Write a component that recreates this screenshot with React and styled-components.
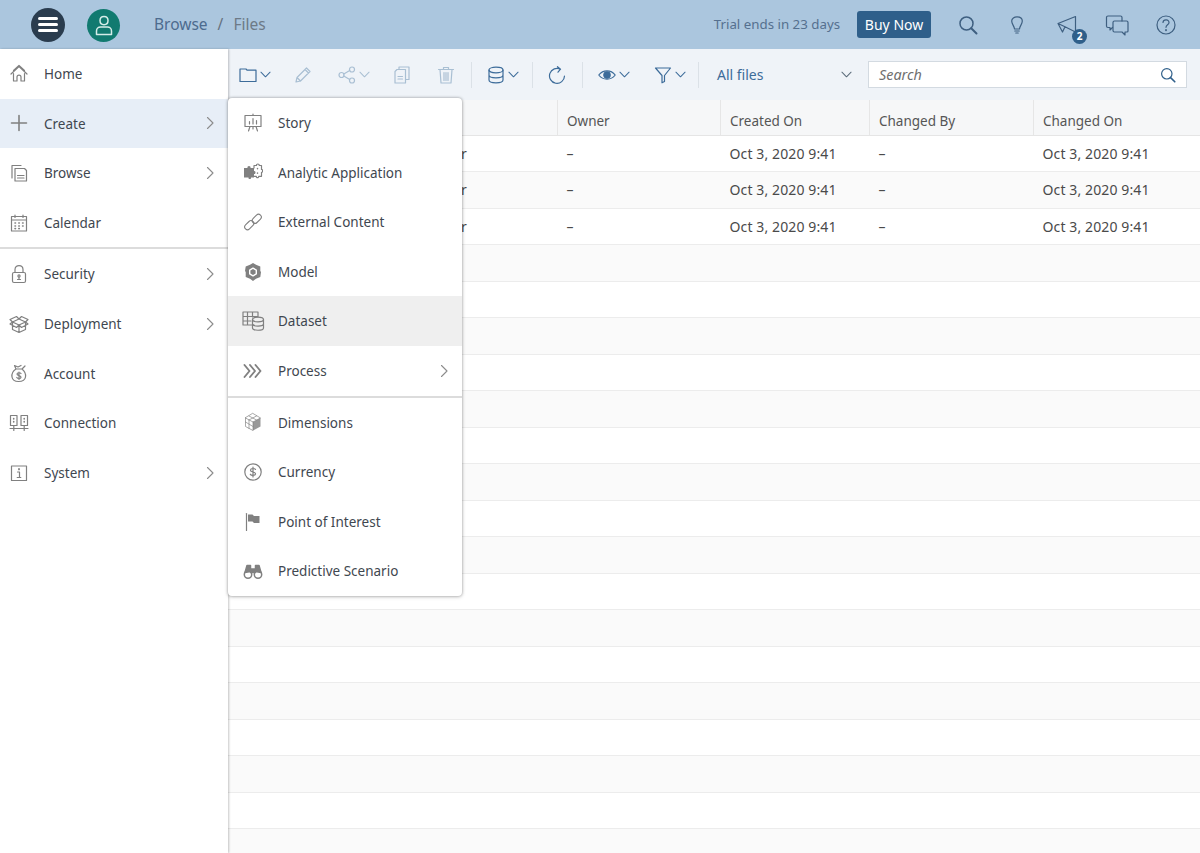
import styled, { createGlobalStyle } from "styled-components";

const FONT = `"Noto Sans", "Open Sans", sans-serif`;

const GlobalStyle = createGlobalStyle`
  html, body {
    margin: 0;
    height: 100%;
    overflow: hidden;
    background: #fff;
    font-family: ${FONT};
  }
  * { box-sizing: border-box; }
`;

const Icon = ({ size = 20, children, ...rest }) => (
  <svg width={size} height={size} viewBox="0 0 20 20" fill="none" stroke="currentColor" strokeWidth="1.2" strokeLinecap="round" strokeLinejoin="round" {...rest}>
    {children}
  </svg>
);

const Chevron = () => (
  <Icon size={14} viewBox="0 0 14 14" strokeWidth="1.1"><path d="M4.5 1.5 10 7 4.5 12.5" /></Icon>
);
const ChevronDown = () => (
  <Icon size={11} viewBox="0 0 12 12" strokeWidth="1.1"><path d="M1 3.5 6 8.5 11 3.5" /></Icon>
);

const HomeIcon = () => <Icon><path d="M2 10 10 2.5 18 10M4.5 6.5 10 1.5l5.5 5M4.5 9.5V17h3.5v-4c0-2.6 4-2.600 4 0v4h3.500V9.500" /></Icon>;
const PlusIcon = () => <Icon strokeWidth="1.6"><path d="M10 2.500v15M2.500 10h15" /></Icon>;
const BrowseIcon = () => <Icon><path d="M3 15V2.500h9M6 5.500h9.500l2 2V18H6zM8.500 12.500h6.500M8.500 15h6.500" /></Icon>;
const CalendarIcon = () => <Icon><path d="M2.500 3.500h15V18h-15zM2.500 7h15M6 2v2.500M14 2v2.500" /><path strokeWidth="1.6" d="M6 10h.5M9.800 10h.5M13.600 10h.5M6 13h.5M9.800 13h.5M13.600 13h.5M6 15.600h.5M9.800 15.600h.5" /></Icon>;
const LockIcon = () => (
  <Icon>
    <path d="M6 8.500V5.500c0-5.300 8-5.300 8 0v3" />
    <rect x="3.500" y="8.500" width="13" height="10" rx="1.500" />
    <circle cx="10" cy="12" r="1.100" />
    <path d="M10 13v2.500M8.500 15.500h3" />
  </Icon>
);
const BoxIcon = () => <Icon><path d="M3.500 9v6.500L10 18.500l6.500-3V9M10 18.500V11L3.500 8 1 5.500 7.500 2.500 10 5l2.500-2.500L19 5.500 16.500 8 10 11M10 5 3.500 8M10 5l6.500 3M1 10l2.500-2M19 10l-2.500-2M1 10l6.500 3.500L10 11l2.500 2.500L19 10" /></Icon>;
const MoneyIcon = () => <Icon><path d="M7 6c-3 2-4.500 5-4 8 .5 3 3 4.500 6.500 4.500S16 17 16.500 14 15.500 8 13 6zM7 6 5.500 2.500 9 4l3-1.500M13 6l3-3M7.500 6h5" /><path d="M12 10.500c-.5-1-3.800-1.200-4 .5-.2 2 4.300 1.200 4 3.300-.2 1.600-3.600 1.400-4.200.2M10 9v7.500" /></Icon>;
const ConnectionIcon = () => <Icon><path d="M1.500 2.500h6.500v10H1.500zM12 2.500h6.500v10H12zM4.800 12.500v5M15.200 12.500v5M1 15.500h18" /><path strokeWidth="1.6" d="M4.700 5.500v.5M4.700 8.500v.5M15.200 5.500v.5M15.200 8.500v.5" /></Icon>;
const InfoIcon = () => <Icon><path d="M2.500 3h15v14.500h-15zM8.500 9h2v5.500M8.200 14.500h3.600" /><path strokeWidth="1.8" d="M10 6v.4" /></Icon>;

const StoryIcon = () => <Icon><path d="M2 2.500h16v11H2zM10 1v1.500M5.500 18 7 13.500M14.500 18 13 13.500M10 13.500V16M6.500 11V8.500M10 11V5.500M13.500 11V7.500" /></Icon>;
const AppIcon = () => (
  <Icon>
    <path fill="currentColor" stroke="none" d="M1 6h3.500c-.8-2.800 3.800-2.800 3 0H11v3c2-.6 2 3.600 0 3v3.500H8c.5 2-3 2-2.500 0H1z" />
    <path d="M11 6V3.500h2.500c-.3-2 3-2 2.700 0h2.300v4c1.500-.4 1.500 3.200 0 2.800v4h-2.800c.3 1.800-2.700 1.800-2.400 0H11" />
    <path strokeWidth="1.500" d="M14.500 6.500v.3M14.500 11v.3" />
  </Icon>
);
const LinkIcon = () => (
  <Icon strokeWidth="1.1">
    <rect x="1" y="10.400" width="10.500" height="5.600" rx="2.800" transform="rotate(-45 6.250 13.200)" />
    <rect x="8.500" y="4" width="10.500" height="5.600" rx="2.800" transform="rotate(-45 13.750 6.800)" />
  </Icon>
);
const ModelIcon = () => (
  <Icon>
    <path fill="currentColor" stroke="none" d="M10 1 13 2.800 17.300 4.500 17.300 9 18 10 17.300 15 13 16.800 10 19 7 16.800 2.700 15 2.700 10 2 9 2.700 4.500 7 2.800z" />
    <path stroke="#fff" strokeWidth="1.400" d="M10 6.200 13.300 8.100V11.900L10 13.800 6.700 11.900V8.100z" />
  </Icon>
);
const DatasetIcon = () => (
  <Icon size={24} viewBox="0 0 24 24">
    <path d="M13 16H2V3h15v5M2 7.500h15M2 12h8M6.500 3v13M11.500 3v5" />
    <ellipse cx="17" cy="10.500" rx="5.500" ry="2.300" />
    <path d="M11.500 10.500v8.500c0 3 11 3 11 0v-8.500M11.500 14.800c0 3 11 3 11 0" />
  </Icon>
);
const ProcessIcon = () => <Icon strokeWidth="1.900"><path d="M1.500 4 6.500 10 1.500 16M7 4 12 10 7 16M12.500 4 17.500 10 12.500 16" /></Icon>;
const CubeIcon = () => (
  <Icon>
    <path fill="currentColor" stroke="none" opacity=".8" d="M10 10 17.500 6V14.500L10 18.500z" />
    <path strokeWidth=".9" opacity=".75" d="M10 1.500 17.500 6 10 10 2.500 6zM2.500 6v8.500L10 18.500V10M6 4 13.500 8M13.500 4 6 8M2.500 10 10 14.500M6 8v8.500" />
  </Icon>
);
const CurrencyIcon = () => <Icon><circle cx="10" cy="10" r="8.200" /><path d="M12.500 7.500c-.6-1.400-4.800-1.500-5 .6-.2 2.400 5.300 1.400 5 3.900-.2 1.800-4.500 1.800-5.200.2M10 5v10" /></Icon>;
const FlagIcon = () => <Icon><path d="M3.500 1.500v17" /><path fill="currentColor" stroke="none" d="M5 2.500h4.500L11 4h5.500v7H11l-1.500-1.500H5z" /></Icon>;
const BinocularIcon = () => (
  <Icon strokeWidth="1.500">
    <circle cx="5" cy="13.500" r="3.700" />
    <circle cx="15" cy="13.500" r="3.700" />
    <path fill="currentColor" d="M2 11.500 4 4.500h3.500v6zM18 11.500 16 4.500h-3.500v6zM7.500 8h5v3.500h-5z" />
  </Icon>
);

const FolderIcon = () => <Icon size={18} viewBox="0 0 18 18"><path d="M1 3h6l1 1.200h9V15.500H1z" /></Icon>;
const PencilIcon = () => <Icon size={18} viewBox="0 0 18 18"><path d="M2 16l1-4.500L12.500 2l3.500 3.500L6.500 15zM3 11.500 6.500 15M11 3.500 14.500 7" /></Icon>;
const ShareIcon = () => <Icon size={18} viewBox="0 0 18 18"><circle cx="3.500" cy="9" r="2.500" /><circle cx="14" cy="3.500" r="2.500" /><circle cx="14" cy="14.500" r="2.500" /><path d="M5.800 8 11.700 4.600M5.800 10 11.700 13.400" /></Icon>;
const CopyIcon = () => <Icon size={18} viewBox="0 0 18 18"><path d="M6 3.500V1h10v12.500h-3M2 5.500l2-2h8.500V17H2zM5 10.500h4.500M5 13h4.500" /></Icon>;
const TrashIcon = () => <Icon size={18} viewBox="0 0 18 18"><path d="M1.500 3.500h15M6.500 3.500V1.500h5v2M3 3.500l1 13.500h10l1-13.500M7 6.500v8M9 6.500v8M11 6.500v8" /></Icon>;
const DatabaseIcon = () => <Icon size={18} viewBox="0 0 18 18"><ellipse cx="9" cy="4" rx="7" ry="2.800" /><path d="M2 4v10c0 3.700 14 3.700 14 0V4M2 9c0 3.700 14 3.700 14 0" /></Icon>;
const RefreshIcon = () => <Icon size={18} viewBox="0 0 18 18"><path d="M12.500 3.200A7.500 7.500 0 1 0 16.500 10M9.500.7l3 2.500-2.500 3" /></Icon>;
const EyeIcon = () => <Icon size={18} viewBox="0 0 18 18"><path d="M.8 9C5 3.500 13 3.500 17.200 9 13 14.500 5 14.500.8 9z" /><circle cx="9" cy="9" r="3.200" fill="currentColor" /></Icon>;
const FilterIcon = () => <Icon size={18} viewBox="0 0 18 18"><path d="M1.500 2h15L10.500 9.500V15.500L8 16.800V9.500z" /></Icon>;
const SearchIcon = ({ size = 20 }) => <Icon size={size} strokeWidth="1.500"><circle cx="8.500" cy="8.500" r="6.500" /><path d="M13.200 13.200 18.500 18.500" strokeWidth="2" /></Icon>;
const BulbIcon = () => <Icon><path d="M7.500 14c0-3-2.800-4.500-2.800-8 0-5.500 10.600-5.500 10.600 0 0 3.500-2.800 5-2.800 8zM7.800 16h4.400M8.800 18h2.400" /></Icon>;
const MegaphoneIcon = () => <Icon><path d="M1 8.500 18.500 1.500V17L8 11.800 5.500 17 1 8.500zM1 8.500l7 3.300" /></Icon>;
const ChatIcon = () => (
  <Icon size={24} viewBox="0 0 24 24">
    <path d="M17 8V4.500A1.500 1.500 0 0 0 15.500 3H3A1.500 1.500 0 0 0 1.500 4.500V13A1.500 1.500 0 0 0 3 14.500h2V17l2.500-2.500" />
    <path d="M9.500 8h12A1.500 1.500 0 0 1 23 9.500V18a1 1 0 0 1-1 1h-2v3l-3-3H9.500A1.500 1.500 0 0 1 8 17.500v-8A1.500 1.500 0 0 1 9.500 8z" />
  </Icon>
);
const HelpIcon = () => <Icon><circle cx="10" cy="10" r="9" /><path d="M7 7.500c.3-3.800 6.300-3.500 6 .3-.2 2-3 2.200-3 4.500" /><path strokeWidth="1.800" d="M10 15v.3" /></Icon>;
const UserIcon = () => <Icon size={22} viewBox="0 0 22 22" strokeWidth="1.500"><path d="M7 6.500c0-5.500 8-5.500 8 0s-8 5.500-8 0zM3.500 20.500V17c0-2.500 2-4 4-4h7c2 0 4 1.500 4 4v3.500z" /></Icon>;

const navTop = [
  { label: "Home", icon: HomeIcon },
  { label: "Create", icon: PlusIcon, more: true, active: true },
  { label: "Browse", icon: BrowseIcon, more: true },
  { label: "Calendar", icon: CalendarIcon },
];
const navBottom = [
  { label: "Security", icon: LockIcon, more: true },
  { label: "Deployment", icon: BoxIcon, more: true },
  { label: "Account", icon: MoneyIcon },
  { label: "Connection", icon: ConnectionIcon },
  { label: "System", icon: InfoIcon, more: true },
];
const menuTop = [
  { label: "Story", icon: StoryIcon },
  { label: "Analytic Application", icon: AppIcon },
  { label: "External Content", icon: LinkIcon },
  { label: "Model", icon: ModelIcon },
  { label: "Dataset", icon: DatasetIcon, hovered: true },
  { label: "Process", icon: ProcessIcon, more: true },
];
const menuBottom = [
  { label: "Dimensions", icon: CubeIcon },
  { label: "Currency", icon: CurrencyIcon },
  { label: "Point of Interest", icon: FlagIcon },
  { label: "Predictive Scenario", icon: BinocularIcon },
];

const COLUMNS = ["Name", "Created By", "Owner", "Created On", "Changed By", "Changed On"];
const FILLED = ["", "Administrator", "–", "Oct 3, 2020 9:41", "–", "Oct 3, 2020 9:41"];
const rows = [FILLED, FILLED, FILLED, ...Array.from({ length: 17 }, () => ["", "", "", "", "", ""])];

const NavRow = ({ item }) => (
  <NavItem $active={item.active}>
    <NavIcon><item.icon /></NavIcon>
    <NavLabel>{item.label}</NavLabel>
    {item.more && <NavArrow><Chevron /></NavArrow>}
  </NavItem>
);

const MenuRow = ({ item }) => (
  <MenuItem $hovered={item.hovered}>
    <MenuIcon><item.icon /></MenuIcon>
    <NavLabel>{item.label}</NavLabel>
    {item.more && <NavArrow><Chevron /></NavArrow>}
  </MenuItem>
);

export default function App() {
  return (
    <Page>
      <GlobalStyle />
      <Shell>
        <LeftGroup>
          <MenuButton aria-label="Menu"><span /><span /><span /></MenuButton>
          <Avatar><UserIcon /></Avatar>
          <Crumbs>
            <CrumbLink>Browse</CrumbLink>
            <CrumbSlash>/</CrumbSlash>
            <CrumbCurrent>Files</CrumbCurrent>
          </Crumbs>
        </LeftGroup>
        <RightGroup>
          <Trial>Trial ends in 23 days</Trial>
          <BuyButton>Buy Now</BuyButton>
          <ShellIcons>
            <ShellIcon><SearchIcon /></ShellIcon>
            <ShellIcon><BulbIcon /></ShellIcon>
            <ShellIcon><MegaphoneIcon /><Badge>2</Badge></ShellIcon>
            <ShellIcon><ChatIcon /></ShellIcon>
            <ShellIcon><HelpIcon /></ShellIcon>
          </ShellIcons>
        </RightGroup>
      </Shell>

      <Body>
        <Sidebar>
          {navTop.map((item) => <NavRow key={item.label} item={item} />)}
          <Divider />
          {navBottom.map((item) => <NavRow key={item.label} item={item} />)}
        </Sidebar>

        <Main>
          <Toolbar>
            <Tool $w={55}><FolderIcon /><ChevronDown /></Tool>
            <Tool $w={44} $disabled><PencilIcon /></Tool>
            <Tool $w={55} $disabled><ShareIcon /><ChevronDown /></Tool>
            <Tool $w={44} $disabled><CopyIcon /></Tool>
            <Tool $w={33} $disabled><TrashIcon /></Tool>
            <ToolSep />
            <Tool $w={44}><DatabaseIcon /><ChevronDown /></Tool>
            <ToolSep />
            <Tool $w={33}><RefreshIcon /></Tool>
            <ToolSep />
            <Tool $w={56}><EyeIcon /><ChevronDown /></Tool>
            <Tool $w={43}><FilterIcon /><ChevronDown /></Tool>
            <ToolSep />
            <ViewSelect>All files<ChevronDown /></ViewSelect>
            <SearchBox>
              <SearchText>Search</SearchText>
              <SearchGlyph><SearchIcon size={16} /></SearchGlyph>
            </SearchBox>
          </Toolbar>

          <HeadRow>
            {COLUMNS.map((c) => <HeadCell key={c}>{c}</HeadCell>)}
          </HeadRow>
          {rows.map((cells, i) => (
            <Row key={i} $odd={i % 2 === 1}>
              {cells.map((c, j) => <Cell key={j}>{c}</Cell>)}
            </Row>
          ))}
        </Main>

        <CreateMenu>
          {menuTop.map((item) => <MenuRow key={item.label} item={item} />)}
          <Divider />
          {menuBottom.map((item) => <MenuRow key={item.label} item={item} />)}
        </CreateMenu>
      </Body>
    </Page>
  );
}

const Page = styled.div`
  width: 1200px;
  height: 853px;
  overflow: hidden;
  display: flex;
  flex-direction: column;
`;

const Shell = styled.header`
  display: flex;
  align-items: center;
  justify-content: space-between;
  height: 49px;
  flex: none;
  background: #abc6de;
`;

const LeftGroup = styled.div`
  display: flex;
  align-items: center;
  padding-left: 31px;
`;

const MenuButton = styled.button`
  display: flex;
  flex-direction: column;
  align-items: center;
  justify-content: center;
  gap: 3.5px;
  width: 34px;
  height: 34px;
  padding: 0;
  border: none;
  border-radius: 50%;
  background: #2a3c4e;

  span {
    display: block;
    width: 20px;
    height: 2.7px;
    border-radius: 2px;
    background: #fff;
  }
`;

const Avatar = styled.div`
  display: flex;
  align-items: center;
  justify-content: center;
  width: 33px;
  height: 33px;
  margin: 1px 0 0 22px;
  border-radius: 50%;
  background: #117a70;
  color: #d5ece8;
`;

const Crumbs = styled.nav`
  display: flex;
  align-items: center;
  margin: -1px 0 0 34px;
  font-size: 15.5px;
`;

const CrumbLink = styled.span`
  color: #4d6b8e;
`;

const CrumbSlash = styled.span`
  margin: 0 10px;
  color: #66727e;
`;

const CrumbCurrent = styled.span`
  color: #6d7a87;
`;

const RightGroup = styled.div`
  display: flex;
  align-items: center;
`;

const Trial = styled.span`
  margin-top: -1px;
  font-size: 13.3px;
  color: #55708f;
`;

const BuyButton = styled.button`
  height: 27px;
  width: 74px;
  margin-left: 17px;
  padding: 0;
  border: none;
  border-radius: 3px;
  background: #2f5f8a;
  color: #fff;
  font-family: ${FONT};
  font-size: 14px;
`;

const ShellIcons = styled.div`
  display: flex;
  align-items: center;
  margin-left: 12px;
  margin-right: 9px;
`;

const ShellIcon = styled.div`
  position: relative;
  display: flex;
  align-items: center;
  justify-content: center;
  width: 49.6px;
  height: 30px;
  color: #3e5f80;
`;

const Badge = styled.span`
  position: absolute;
  left: 30px;
  top: 19px;
  width: 15px;
  height: 15px;
  border-radius: 50%;
  background: #2f5f8a;
  color: #fff;
  font-size: 10px;
  font-weight: 700;
  line-height: 15px;
  text-align: center;
`;

const Body = styled.div`
  position: relative;
  display: flex;
  flex: 1;
  min-height: 0;
`;

const Sidebar = styled.aside`
  position: relative;
  z-index: 1;
  width: 228px;
  flex: none;
  background: #fff;
  box-shadow: 1px 0 2px rgba(0, 0, 0, 0.22);
`;

const NavItem = styled.div`
  display: flex;
  align-items: center;
  height: 49.6px;
  padding: 0 11px 0 9px;
  background: ${(p) => (p.$active ? "#e7eef7" : "transparent")};
`;

const NavIcon = styled.span`
  display: flex;
  align-items: center;
  justify-content: center;
  width: 20px;
  height: 24px;
  margin-right: 15px;
  color: #808080;
`;

const NavLabel = styled.span`
  flex: 1;
  padding-top: 0.5px;
  font-size: 13.5px;
  color: #3f4750;
`;

const NavArrow = styled.span`
  display: flex;
  color: #8c8c8c;
`;

const Divider = styled.div`
  height: 2px;
  background: #dcdcdc;
`;

const Main = styled.main`
  flex: 1;
  min-width: 0;
  background: #fff;
`;

const Toolbar = styled.div`
  display: flex;
  align-items: center;
  height: 51px;
  padding: 0 13px 0 12px;
  background: #eff3f8;
`;

const Tool = styled.div`
  display: flex;
  align-items: center;
  gap: 3px;
  width: ${(p) => p.$w}px;
  flex: none;
  color: ${(p) => (p.$disabled ? "#a9bfd3" : "#3d6c9a")};

  svg:first-child {
    margin-left: -1px;
  }
`;

const ToolSep = styled.span`
  width: 1px;
  height: 26px;
  margin-right: 16px;
  flex: none;
  background: #dbe1e7;
`;

const ViewSelect = styled.div`
  display: flex;
  align-items: center;
  justify-content: space-between;
  width: 135px;
  margin-left: 2px;
  flex: none;
  font-size: 14px;
  color: #3d6c9a;

  svg {
    color: #5b6b7a;
  }
`;

const SearchBox = styled.div`
  display: flex;
  align-items: center;
  justify-content: space-between;
  flex: 1;
  height: 27px;
  margin-left: 16px;
  padding: 0 10px;
  border: 1px solid #d3dae1;
  background: #fff;
`;

const SearchText = styled.span`
  font-size: 14.4px;
  font-style: italic;
  color: #6f6f6f;
`;

const SearchGlyph = styled.span`
  display: flex;
  color: #2f5f8a;
`;

const GRID = "137px 192px 163px 149px 164px 1fr";

const HeadRow = styled.div`
  display: grid;
  grid-template-columns: ${GRID};
  height: 35.5px;
  background: #f6f7f8;
  border-bottom: 1px solid #e5e5e5;
`;

const HeadCell = styled.div`
  display: flex;
  align-items: center;
  padding: 7px 0 0 9px;
  border-left: 1px solid #e6e6e6;
  font-size: 13.5px;
  color: #555;
`;

const Row = styled.div`
  display: grid;
  grid-template-columns: ${GRID};
  height: 36.5px;
  background: ${(p) => (p.$odd ? "#fafafa" : "#fff")};
  border-bottom: 1px solid #ececec;
`;

const Cell = styled.div`
  display: flex;
  align-items: center;
  padding-left: 9.5px;
  font-size: 14px;
  letter-spacing: 0.12px;
  color: #4a4a4a;
  white-space: nowrap;
`;

const CreateMenu = styled.div`
  position: absolute;
  z-index: 2;
  left: 228px;
  top: 49px;
  width: 234px;
  border-radius: 4px;
  background: #fff;
  overflow: hidden;
  box-shadow: 0 0 3px rgba(0, 0, 0, 0.35), 0 1px 4px rgba(0, 0, 0, 0.15);
`;

const MenuItem = styled.div`
  display: flex;
  align-items: center;
  height: 49.6px;
  padding: 0 11px 0 13px;
  background: ${(p) => (p.$hovered ? "#efefef" : "transparent")};
`;

const MenuIcon = styled.span`
  display: flex;
  align-items: center;
  justify-content: center;
  width: 24px;
  height: 24px;
  margin-right: 13px;
  color: #808080;
`;
